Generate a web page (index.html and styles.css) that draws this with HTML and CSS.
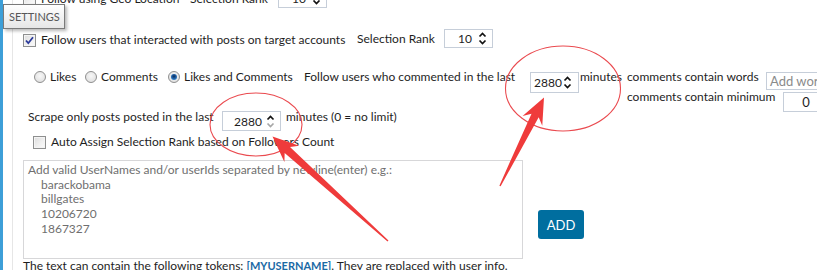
FILE: index.html
```html
<!DOCTYPE html>
<html>
<head>
<meta charset="utf-8">
<link rel="stylesheet" href="styles.css">
</head>
<body>
<div class="page">
  <div class="edge"></div>
  <div class="rail"></div>
  <main class="content">
    <div class="row row-geo">
      <label class="check w-geo"><span class="cb"></span><span>Follow using Geo Location</span></label>
      <span class="lbl w-rank1">Selection Rank</span>
      <div class="num num-rank">
        <span class="val">10</span>
        <svg class="spin" width="9" height="17" viewBox="0 0 9 17"><path d="M1.5 6.5L4.5 3.5L7.5 6.5" class="up"/><path d="M1.5 10.5L4.5 13.5L7.5 10.5" class="down"/></svg>
      </div>
    </div>

    <div class="row row-interact">
      <label class="check w-interact"><span class="cb checked"><svg width="11" height="11" viewBox="0 0 11 11"><path d="M2 5.5L4.3 8.2L9 2.2" /></svg></span><span>Follow users that interacted with posts on target accounts</span></label>
      <span class="lbl w-rank2">Selection Rank</span>
      <div class="num num-rank">
        <span class="val">10</span>
        <svg class="spin" width="9" height="17" viewBox="0 0 9 17"><path d="M1.5 6.5L4.5 3.5L7.5 6.5" class="up"/><path d="M1.5 10.5L4.5 13.5L7.5 10.5" class="down"/></svg>
      </div>
    </div>

    <div class="row row-react">
      <label class="radio w-likes"><span class="rb"></span><span>Likes</span></label>
      <label class="radio w-comments"><span class="rb"></span><span>Comments</span></label>
      <label class="radio w-both"><span class="rb on"></span><span>Likes and Comments</span></label>
      <span class="lbl w-follow">Follow users who commented in the last</span>
      <div class="num num-last">
        <span class="val">2880</span>
        <svg class="spin" width="9" height="17" viewBox="0 0 9 17"><path d="M1.5 6.5L4.5 3.5L7.5 6.5" class="up"/><path d="M1.5 10.5L4.5 13.5L7.5 10.5" class="down"/></svg>
      </div>
      <span class="lbl w-minutes">minutes</span>
      <div class="filters">
        <div class="filter">
          <span class="lbl w-words">comments contain words</span>
          <div class="textin words"><span class="ph">Add word</span></div>
        </div>
        <div class="filter">
          <span class="lbl w-min">comments contain minimum</span>
          <div class="textin minbox"><span class="val">0</span></div>
        </div>
      </div>
    </div>

    <div class="row row-scrape">
      <span class="lbl w-scrape">Scrape only posts posted in the last</span>
      <div class="num num-scrape">
        <span class="val">2880</span>
        <svg class="spin" width="9" height="17" viewBox="0 0 9 17"><path d="M1.5 6.5L4.5 3.5L7.5 6.5" class="up"/><path d="M1.5 10.5L4.5 13.5L7.5 10.5" class="down off"/></svg>
      </div>
      <span class="lbl after-scrape">minutes (0 = no limit)</span>
    </div>

    <div class="row row-auto">
      <label class="check"><span class="cb"></span><span>Auto Assign Selection Rank based on Followers Count</span></label>
    </div>

    <div class="row row-list">
      <div class="textbox">
        <div>Add valid UserNames and/or userIds separated by newline(enter) e.g.:</div>
        <div class="ex">barackobama</div>
        <div class="ex">billgates</div>
        <div class="ex">10206720</div>
        <div class="ex">1867327</div>
      </div>
      <button class="add">ADD</button>
    </div>

    <p class="tokens">The text can contain the following tokens: <span class="token">[MYUSERNAME]</span>. They are replaced with user info.</p>
  </main>

  <div class="tooltip">SETTINGS</div>

  <svg class="marks" width="817" height="270" viewBox="0 0 817 270">
    <ellipse cx="256" cy="124.5" rx="46" ry="31.5" class="ring"/>
    <ellipse cx="563" cy="88.5" rx="57.5" ry="42.5" class="ring"/>
    <polygon class="arrow" points="272.5,136.5 284.4,162.1 284.65,152.89 387.53,241.52 388.47,240.48 290.01,146.95 299.16,145.78"/>
    <polygon class="arrow" points="544,97.5 522.57,115.88 531.52,113.63 499.37,185.69 500.63,186.31 538.68,117.19 542.27,125.68"/>
  </svg>
</div>
</body>
</html>
```

FILE: styles.css
```css
body {
  margin: 0;
  font-family: Lato, "Open Sans", sans-serif;
  font-size: 12px;
  color: #1e1e1e;
  background: #fff;
}

.page {
  position: relative;
  display: flex;
  width: 817px;
  height: 270px;
  overflow: hidden;
  background: #fff;
}

.edge {
  flex: none;
  width: 3px;
  background: #3d9fd8;
}

.rail {
  flex: none;
  width: 9px;
  border-right: 1px solid #e6e6e6;
}

.content {
  flex: 1;
  min-width: 0;
  padding-left: 10px;
  display: flex;
  flex-direction: column;
}

.row {
  display: flex;
  flex: none;
  align-items: center;
  white-space: nowrap;
}

.lbl {
  flex: none;
  line-height: 16px;
}

/* checkbox */
.check, .radio {
  flex: none;
  display: flex;
  align-items: center;
  line-height: 16px;
}

.cb {
  flex: none;
  box-sizing: border-box;
  width: 13px;
  height: 13px;
  margin-right: 5px;
  border: 1px solid #8e8f8f;
  background: linear-gradient(135deg, #dcdcdc 0%, #f1f1f1 60%, #fbfbfb 100%);
  box-shadow: inset 0 0 0 1px #f4f4f4;
  display: flex;
  align-items: center;
  justify-content: center;
}

.cb svg path {
  fill: none;
  stroke: #2b3a9a;
  stroke-width: 1.8;
}

/* radio */
.rb {
  flex: none;
  box-sizing: border-box;
  width: 12px;
  height: 12px;
  margin-right: 4px;
  border-radius: 50%;
  border: 1px solid #8f8f8f;
  background: radial-gradient(circle at 50% 40%, #f7f7f7 0%, #e3e3e3 70%, #d2d2d2 100%);
  position: relative;
}

.rb.on::after {
  content: "";
  position: absolute;
  left: 2px;
  top: 2px;
  width: 6px;
  height: 6px;
  border-radius: 50%;
  background: radial-gradient(circle at 50% 40%, #0d2a55 0%, #1f5fa6 45%, #4ba3e4 100%);
}

/* numeric up-down */
.num {
  flex: none;
  box-sizing: border-box;
  height: 19px;
  border: 1px solid #c6ced9;
  background: #fff;
  display: flex;
  align-items: center;
}

.num .val {
  flex: 1;
  line-height: 16px;
}

.spin {
  flex: none;
  display: block;
}

.spin path {
  fill: none;
  stroke: #111;
  stroke-width: 1.7;
}

.spin path.off {
  stroke: #a7a7a7;
}

/* row 1 (cut off at top) */
.row-geo {
  height: 19px;
  margin-top: -11px;
}

.w-geo { width: 167px; }
.w-rank1 { width: 88px; }

.num-rank {
  width: 49px;
  padding-right: 5px;
}

.num-rank .val {
  text-align: right;
  padding-right: 6px;
}

/* row 2 */
.row-interact {
  height: 19px;
  margin-top: 21px;
}

.row-interact .check { padding-top: 3px; }

.w-interact { width: 334px; }
.w-rank2 { width: 87px; }

/* row 3 */
.row-react {
  height: 40px;
  margin-top: 21px;
  align-items: flex-start;
  padding-left: 11px;
}

.w-likes { width: 51px; }
.w-comments { width: 83px; }
.w-both { width: 136px; }
.w-follow { width: 226px; }

.num-last {
  width: 49px;
  height: 21px;
  margin-top: 3px;
  padding-left: 3px;
  padding-right: 6px;
}

.num-last .val { padding-top: 1px; }

.w-minutes {
  width: 47px;
  margin-left: 1px;
}

.filters {
  flex: none;
  display: flex;
  flex-direction: column;
}

.filter {
  display: flex;
  align-items: flex-start;
  height: 20px;
}

.w-words { width: 139px; }
.w-min { width: 156px; }

.textin {
  flex: none;
  box-sizing: border-box;
  margin-top: 3px;
  border: 1px solid #c6ced9;
  background: #fff;
  line-height: 16px;
}

.words {
  width: 70px;
  height: 18px;
  padding-left: 3px;
}

.ph {
  color: #8a8a8a;
  font-size: 13px;
}

.minbox {
  width: 46px;
  height: 20px;
  text-align: center;
  padding-top: 1px;
  font-size: 13px;
}

/* row 5 */
.row-scrape {
  height: 22px;
  padding-left: 5px;
  align-items: flex-start;
}

.w-scrape { width: 194px; }

.num-scrape {
  width: 59px;
  height: 20px;
  margin-top: 2px;
  padding-left: 11px;
  padding-right: 5px;
}

.num-scrape .val { padding-top: 1px; }

.after-scrape { margin-left: 5px; }

/* row 6 */
.row-auto {
  height: 16px;
  margin-top: 3px;
  padding-left: 10px;
}

/* list */
.row-list {
  margin-top: 10px;
  align-items: flex-start;
}

.textbox {
  flex: none;
  box-sizing: border-box;
  width: 500px;
  height: 99px;
  border: 1px solid #d7d7d9;
  padding: 2px 4px;
  color: #6f6f6f;
  line-height: 14.7px;
  font-size: 12px;
}

.textbox .ex {
  padding-left: 13px;
}

.add {
  flex: none;
  margin: 50px 0 0 15px;
  width: 46px;
  height: 29px;
  padding: 0;
  border: none;
  border-radius: 3px;
  background: #006e9f;
  color: #fff;
  font-family: inherit;
  font-size: 13px;
}

.tokens {
  margin: -1px 0 0;
  line-height: 16px;
  white-space: nowrap;
}

.token {
  color: #1b6aa5;
  font-weight: 700;
  font-size: 11px;
}

/* overlays */
.tooltip {
  position: absolute;
  left: 3px;
  top: 4px;
  box-sizing: border-box;
  width: 62px;
  height: 25px;
  padding-left: 5px;
  border: 1px solid #7a7a7a;
  background: linear-gradient(#ffffff, #e6e6e6);
  box-shadow: 2px 2px 3px rgba(0, 0, 0, 0.28);
  color: #575757;
  font-size: 11px;
  line-height: 23px;
}

.marks {
  position: absolute;
  left: 0;
  top: 0;
  pointer-events: none;
}

.ring {
  fill: none;
  stroke: #ea4a4f;
  stroke-width: 1.1;
}

.arrow {
  fill: #ef3b3b;
}
```
